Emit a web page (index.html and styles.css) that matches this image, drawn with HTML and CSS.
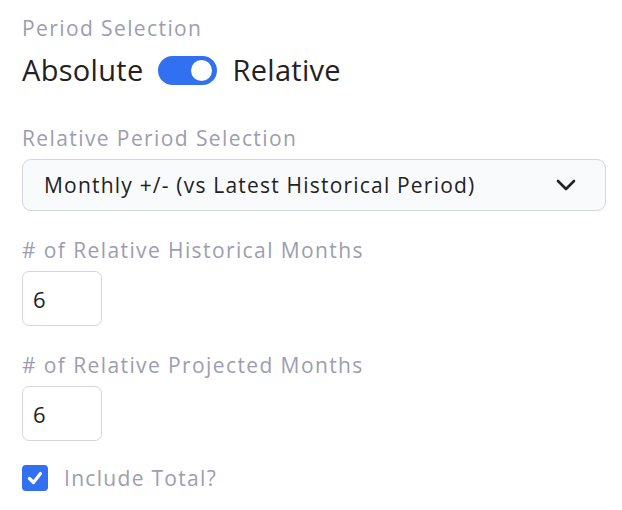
FILE: index.html
```html
<html>
<head>
    <title>Period Selection</title>
    <link rel="stylesheet" href="styles.css">
</head>
<body>
    <div class="panel">
        <div class="label">Period Selection</div>
        <div class="switch-row">
            <span>Absolute</span>
            <span class="switch on"><span class="knob"></span></span>
            <span>Relative</span>
        </div>

        <div class="field">
            <div class="label">Relative Period Selection</div>
            <div class="select">
                <span>Monthly +/- (vs Latest Historical Period)</span>
                <svg class="chevron" width="20" height="12" viewBox="0 0 20 12">
                    <path d="M2 2 L10 10 L18 2" fill="none" stroke="#222" stroke-width="2.6" stroke-linecap="round" stroke-linejoin="round"/>
                </svg>
            </div>
        </div>

        <div class="field">
            <div class="label"># of Relative Historical Months</div>
            <div class="num-box">6</div>
        </div>

        <div class="field">
            <div class="label"># of Relative Projected Months</div>
            <div class="num-box">6</div>
        </div>

        <div class="check-row">
            <span class="checkbox">
                <svg width="18" height="18" viewBox="0 0 18 18">
                    <path d="M3.5 9.5 L7.5 13.5 L14.5 4.5" fill="none" stroke="#fff" stroke-width="3.2" stroke-linecap="round" stroke-linejoin="round"/>
                </svg>
            </span>
            <span class="check-label">Include Total?</span>
        </div>
    </div>
</body>
</html>
```

FILE: styles.css
```css
body {
    margin: 0;
    background: #fff;
    font-family: "Open Sans", "Noto Sans", sans-serif;
    color: #222;
}
.panel {
    padding: 14px 16px 0 22px;
}
.label {
    font-size: 21px;
    letter-spacing: 1.4px;
    color: #9d9db0;
    line-height: 28px;
}
.switch-row {
    display: flex;
    align-items: center;
    font-size: 29px;
    letter-spacing: 0.3px;
    line-height: 32px;
    margin-top: 12px;
    margin-bottom: 38px;
}
.switch {
    width: 59px;
    height: 29px;
    border-radius: 15px;
    background: #3170f0;
    display: flex;
    align-items: center;
    justify-content: flex-end;
    padding: 0 5px;
    box-sizing: border-box;
    margin: 0 15px 0 15px;
}
.knob {
    width: 21px;
    height: 21px;
    border-radius: 50%;
    background: #fff;
}
.field {
    margin-bottom: 25px;
}
.field .label {
    margin-bottom: 7px;
}
.select {
    height: 52px;
    border: 1.5px solid #d4d7dd;
    border-radius: 9px;
    background: #f9fafc;
    display: flex;
    align-items: center;
    justify-content: space-between;
    padding: 0 29px 0 21px;
    font-size: 21px;
    letter-spacing: 1.2px;
    box-sizing: border-box;
}
.num-box {
    width: 80px;
    height: 55px;
    border: 1.5px solid #d4d7dd;
    border-radius: 7px;
    box-sizing: border-box;
    font-size: 22px;
    display: flex;
    align-items: center;
    padding-left: 10px;
}
.check-row {
    display: flex;
    align-items: center;
    gap: 16px;
    line-height: 26px;
    margin-top: -1px;
}
.checkbox {
    width: 26px;
    height: 26px;
    border-radius: 4px;
    background: #3170f0;
    display: flex;
    align-items: center;
    justify-content: center;
}
.check-label {
    font-size: 21px;
    letter-spacing: 1.3px;
    color: #9d9db0;
}
```
